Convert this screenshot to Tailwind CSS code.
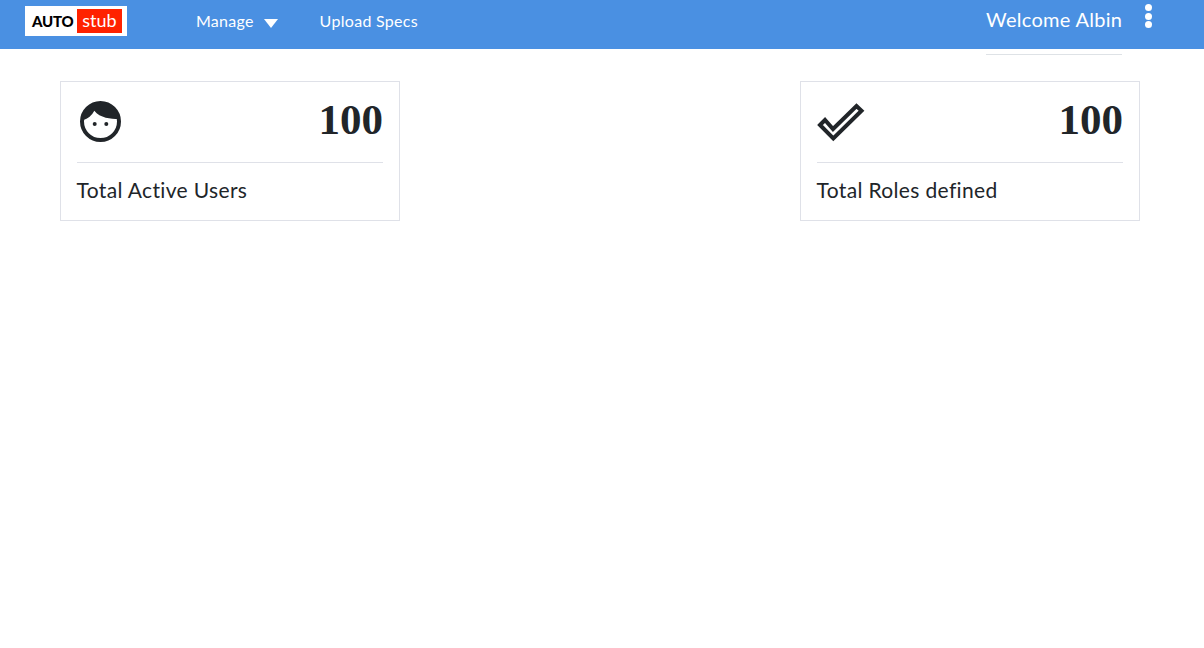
<!DOCTYPE html>
<html lang="en">
<head>
    <meta charset="UTF-8">
    <meta name="viewport" content="width=device-width, initial-scale=1.0">
    <title>Autostub</title>
    <script src="https://cdn.jsdelivr.net/npm/@tailwindcss/browser@4"></script>
</head>
<body class="bg-white text-[#212529] font-['Lato','Open_Sans',sans-serif] h-screen overflow-hidden">
<nav class="relative h-[49px] bg-[#4a90e2] flex items-start text-white">
    <!-- logo -->
    <div class="ml-[25px] mt-[6px] w-[102px] h-[30px] bg-white flex items-center pl-[7px]">
        <span class="text-[15px] font-black text-black tracking-[-0.2px] w-[45px] leading-none">AUTO</span>
        <span class="w-[45px] h-[24px] bg-[#ff2200] text-white text-[18px] leading-[23px] text-center">stub</span>
    </div>
    <a class="ml-[69px] mt-[12px] text-[16px] tracking-[0.25px] leading-[18px]">Manage</a>
    <svg class="ml-[10px] mt-[19px]" width="14" height="9" viewBox="0 0 14 9"><path d="M0 0H14L7 9Z" fill="#fff"/></svg>
    <a class="ml-[42px] mt-[12px] text-[16px] tracking-[0.3px] leading-[18px]">Upload Specs</a>
    <div class="ml-auto mr-[82px] mt-[8px] text-[20px] tracking-[0.3px] leading-[23px] w-[136px] whitespace-nowrap">Welcome Albin</div>
    <div class="absolute left-[1144.5px] top-[4px] flex flex-col gap-[1.7px]">
        <span class="w-[7px] h-[7px] rounded-full bg-white"></span>
        <span class="w-[7px] h-[7px] rounded-full bg-white"></span>
        <span class="w-[7px] h-[7px] rounded-full bg-white"></span>
    </div>
    <div class="absolute left-[986px] top-[54px] w-[136px] h-px bg-[#dee2e6]"></div>
</nav>
<main class="flex justify-between pl-[60px] pr-[64px] pt-[32px]">
    <div class="w-[340px] h-[140px] border border-[#dfe1e8] px-[16px]">
        <div class="h-[81px] flex items-center justify-between border-b border-[#dfe1e8]">
            <svg class="ml-[3px] mt-[-1px]" width="41" height="41" viewBox="0 0 41 41">
                <circle cx="20.5" cy="20.5" r="18.5" fill="#fff" stroke="#212529" stroke-width="4"/>
                <path d="M3 19C3 9 11 1 20.5 1C31 1 38 9 38.500 18C31 18 20 17 14.300 9.700C12 14 8 18 3 19Z" fill="#212529"/>
                <circle cx="14.700" cy="23" r="2" fill="#212529"/>
                <circle cx="26.300" cy="23" r="2" fill="#212529"/>
            </svg>
            <span class="text-[43px] leading-none font-bold font-['Liberation_Serif',serif] mt-[-5px]">100</span>
        </div>
        <div class="mt-[15px] ml-[-0.5px] text-[21px] tracking-[0.35px] leading-[24px]">Total Active Users</div>
    </div>
    <div class="w-[340px] h-[140px] border border-[#dfe1e8] px-[16px]">
        <div class="h-[81px] flex items-center justify-between border-b border-[#dfe1e8]">
            <svg width="48" height="42" viewBox="0 0 48 42">
                <path d="M3 24L8 19L16 28L39.500 5L44.500 9.700L16.300 37.500Z" fill="none" stroke="#212529" stroke-width="4"/>
            </svg>
            <span class="text-[43px] leading-none font-bold font-['Liberation_Serif',serif] mt-[-5px]">100</span>
        </div>
        <div class="mt-[15px] ml-[-0.5px] text-[21px] tracking-[0.35px] leading-[24px]">Total Roles defined</div>
    </div>
</main>
</body>
</html>
